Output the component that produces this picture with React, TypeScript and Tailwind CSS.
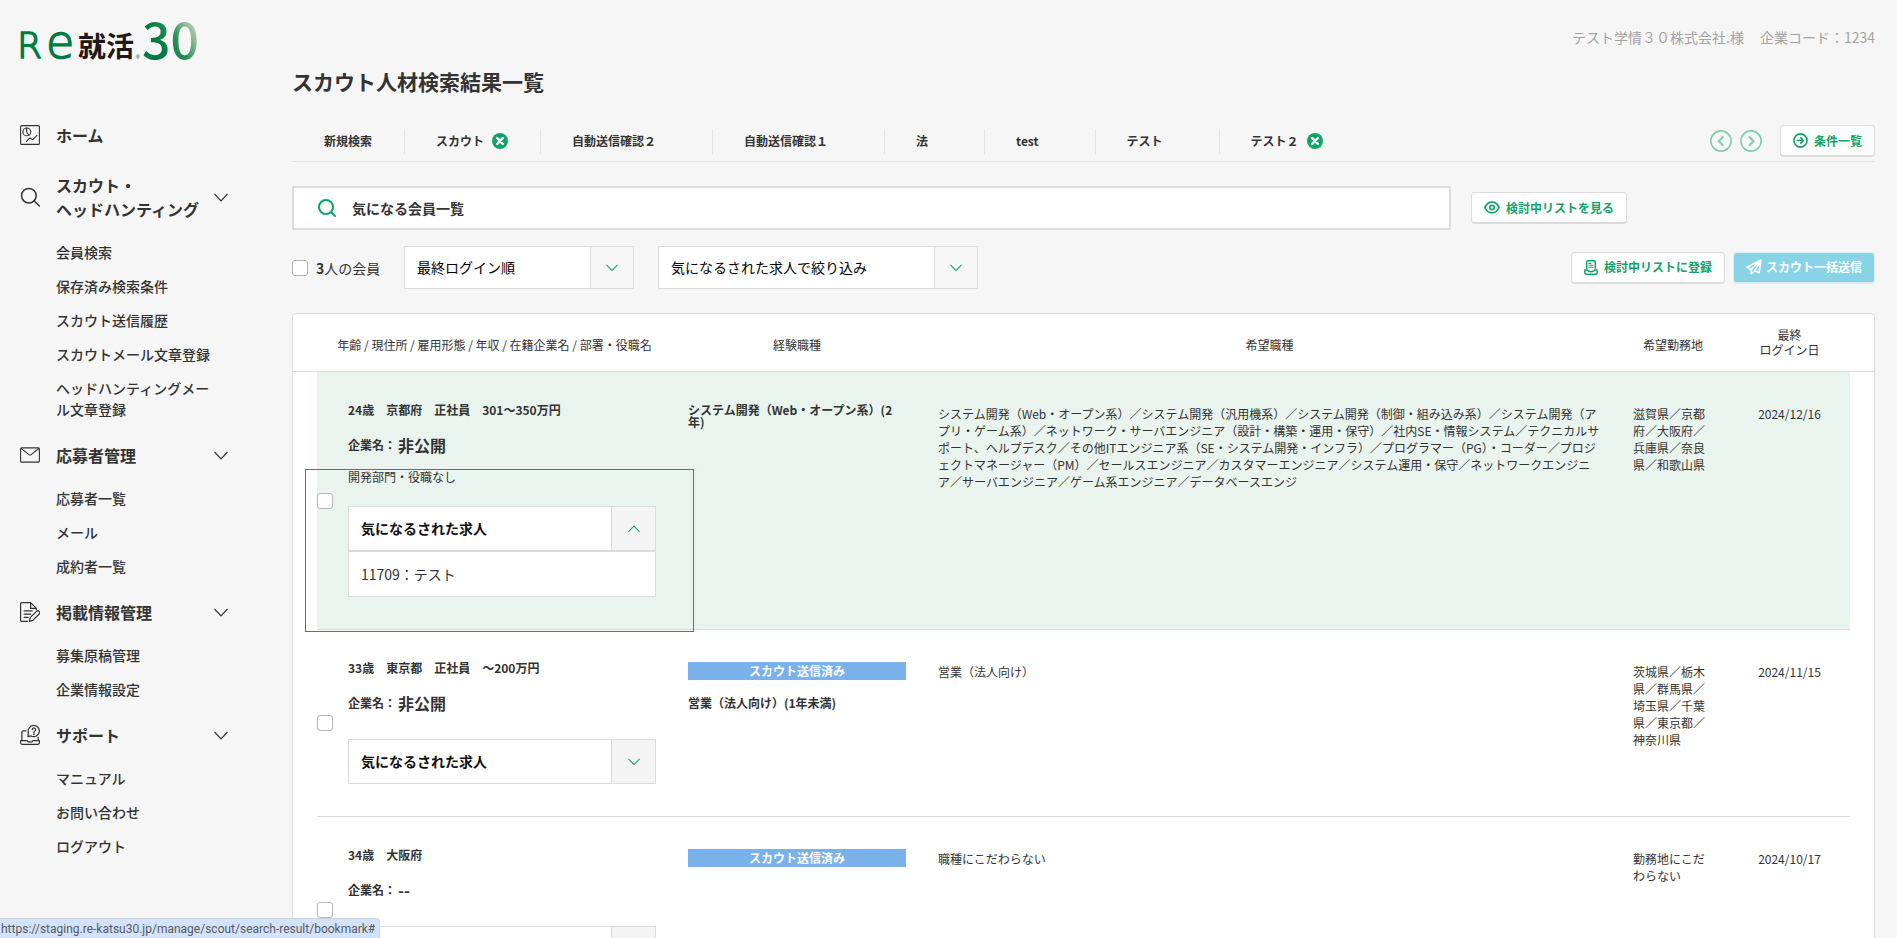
import { useState } from "react";
import type { ReactNode } from "react";

type MenuGroup = {
  label: ReactNode;
  icon: ReactNode;
  items: string[];
};

type Member = {
  id: number;
  profile: string;
  company: string;
  department?: string;
  scouted: boolean;
  experience?: string;
  wishedJobs: string;
  wishedArea: string;
  lastLogin: string;
  jobs: string[];
  selected?: boolean;
};

/* ---------- icons ---------- */

const HomeIcon = () => (
  <svg width="20" height="20" viewBox="0 0 20 20" fill="none" stroke="#333" strokeWidth="1.1" strokeLinecap="round" strokeLinejoin="round" className="shrink-0" aria-hidden="true">
    <rect x="0.6" y="0.6" width="18.8" height="18.8" rx="1" />
    <circle cx="6.8" cy="6.9" r="3.9" />
    <path d="M6.6 3v4l2.3 3.2" />
    <path d="M6.4 16.4l3.6-3.6 2.4 2 4.6-4.4M6.4 16.4l1.2-1" />
  </svg>
);

const SearchIcon = () => (
  <svg width="20" height="20" viewBox="0 0 20 20" fill="none" stroke="#333" strokeWidth="1.5" strokeLinecap="round" className="shrink-0" aria-hidden="true">
    <circle cx="8.9" cy="8.7" r="7.3" />
    <path d="M14.2 14l5.2 5" />
  </svg>
);

const MailIcon = () => (
  <svg width="20" height="16" viewBox="0 0 20 16" fill="none" stroke="#333" strokeWidth="1.1" strokeLinejoin="round" className="shrink-0" aria-hidden="true">
    <rect x="0.6" y="0.9" width="18.8" height="14.2" rx="1" />
    <path d="M0.9 1.3l8 6.3q1.1.8 2.2 0l8-6.3" />
  </svg>
);

const DocumentIcon = () => (
  <svg width="20" height="20" viewBox="0 0 20 20" fill="none" stroke="#333" strokeWidth="1.2" strokeLinecap="round" strokeLinejoin="round" className="shrink-0" aria-hidden="true">
    <path d="M7.6 19.4H1.8a1.2 1.2 0 0 1-1.2-1.2V1.8A1.2 1.2 0 0 1 1.8.6h8.8l5.6 5.6v1.4" />
    <path d="M10.6.8v5.6h5.4" />
    <path d="M4.2 8.9h8M4.2 12.2h6.6M4.2 15.4h4" />
    <path d="M9.4 19.3l.8-3.6 6.3-6.4a1.9 1.9 0 0 1 2.7 2.7l-6.4 6.4-3.4.9z" />
  </svg>
);

const SupportIcon = () => (
  <svg width="20" height="20" viewBox="0 0 20 20" fill="none" stroke="#333" strokeWidth="1.2" strokeLinecap="round" strokeLinejoin="round" className="shrink-0" aria-hidden="true">
    <path d="M6 5.8H3.2a1.3 1.3 0 0 0-1.3 1.3v8.4M18.2 12.2v3.3" />
    <path d="M.6 15.7h6.6l.9 1.2h3.8l.9-1.2h6.6v2a1.7 1.7 0 0 1-1.7 1.7H2.3a1.7 1.7 0 0 1-1.7-1.7z" />
    <path d="M8.3 7.3a5.6 5.6 0 1 1 2.7 3.6l-3.1.7z" />
    <path d="M12.2 4.7a1.7 1.7 0 1 1 2.6 1.4c-.7.4-.9.7-.9 1.3" />
    <circle cx="13.9" cy="9.2" r=".35" fill="#333" />
  </svg>
);

const Chevron = ({ up = false, className = "" }: { up?: boolean; className?: string }) => (
  <svg viewBox="0 0 14 9" fill="none" stroke="currentColor" strokeWidth="1.2" className={`shrink-0 ${className}`} aria-hidden="true">
    <path d={up ? "M.5 8L7 1.2 13.5 8" : "M.5 1L7 7.8 13.5 1"} />
  </svg>
);

const CloseIcon = () => (
  <svg width="16" height="16" viewBox="0 0 16 16" aria-hidden="true">
    <circle cx="8" cy="8" r="8" fill="#10a566" />
    <path d="M5.2 5.2l5.6 5.6M10.8 5.2l-5.6 5.6" stroke="#fff" strokeWidth="2.4" strokeLinecap="round" />
  </svg>
);

const CircleArrow = ({ direction }: { direction: "left" | "right" }) => (
  <svg width="22" height="22" viewBox="0 0 22 22" fill="none" stroke="#80cdab" strokeWidth="1.6" strokeLinecap="round" aria-hidden="true">
    <circle cx="11" cy="11" r="10.1" />
    <path strokeWidth="2" d={direction === "left" ? "M12.8 7l-4 4.2 4 4.2" : "M9.4 7l4 4.2-4 4.2"} />
  </svg>
);

const ListIcon = () => (
  <svg width="15" height="15" viewBox="0 0 15 15" fill="none" stroke="currentColor" strokeWidth="1.6" strokeLinecap="round" strokeLinejoin="round" aria-hidden="true">
    <circle cx="7.5" cy="7.5" r="6.6" />
    <path d="M4.5 7.5h5.8M7.8 4.9l2.6 2.6-2.6 2.6" />
  </svg>
);

const EyeIcon = () => (
  <svg width="16" height="13" viewBox="0 0 16 13" fill="none" stroke="currentColor" strokeWidth="1.7" strokeLinejoin="round" aria-hidden="true">
    <path d="M.9 6.5C2.4 3 5 1.2 8 1.2s5.6 1.8 7.1 5.3C13.6 10 11 11.8 8 11.8S2.4 10 .9 6.5z" />
    <circle cx="8" cy="6.5" r="2.2" />
  </svg>
);

const TrayIcon = () => (
  <svg width="14" height="15" viewBox="0 0 14 15" fill="none" stroke="currentColor" strokeWidth="1.5" strokeLinecap="round" strokeLinejoin="round" aria-hidden="true">
    <path d="M2.7 8.6V2A1.2 1.2 0 0 1 3.9.8h6.2A1.2 1.2 0 0 1 11.3 2v6.6" />
    <path d="M5 3.4h1.8M5 5.3h4M5 7.2h4" strokeWidth="1.1" />
    <path d="M.8 9.9h2.6c.6 1.3 1.9 1.9 3.6 1.9s3-.6 3.6-1.9h2.6v2.9a1.4 1.4 0 0 1-1.4 1.4H2.2a1.4 1.4 0 0 1-1.4-1.4z" />
  </svg>
);

const PlaneIcon = () => (
  <svg width="16" height="16" viewBox="0 0 16 16" fill="none" stroke="currentColor" strokeWidth="1.6" strokeLinecap="round" strokeLinejoin="round" aria-hidden="true">
    <path d="M15 1L.9 8.3l4.2 2.2L15 1l-1.9 12.8-4.3-2L15 1M5.1 10.5v4.3l3.7-3" />
  </svg>
);

const Logo = () => (
  <svg width="210" height="76" viewBox="0 0 210 76" role="img" aria-label="Re就活30">
    <defs>
      <linearGradient id="logo-green" gradientUnits="userSpaceOnUse" x1="160" y1="46" x2="194" y2="26">
        <stop offset="0" stopColor="#007c42" />
        <stop offset="0.45" stopColor="#2f8f5c" />
        <stop offset="1" stopColor="#b9cfae" />
      </linearGradient>
    </defs>
    <g fontFamily="DejaVu Sans" fontWeight="200" fill="#007c42" stroke="#007c42" strokeWidth="1.6">
      <text x="17" y="58" fontSize="36">R</text>
      <text x="46" y="58" fontSize="46">e</text>
    </g>
    <text x="78" y="57" fontFamily="Noto Sans CJK JP" fontWeight="700" fontSize="28" fill="#231815">就活</text>
    <text x="136" y="59" fontFamily="Liberation Sans" fontSize="5" fill="#231815">®</text>
    <text x="142" y="59" fontFamily="Noto Sans CJK JP" fontWeight="500" fontSize="50" fill="url(#logo-green)">30</text>
  </svg>
);

/* ---------- data ---------- */

const menu: MenuGroup[] = [
  {
    label: (
      <>
        スカウト・
        <br />
        ヘッドハンティング
      </>
    ),
    icon: <SearchIcon />,
    items: ["会員検索", "保存済み検索条件", "スカウト送信履歴", "スカウトメール文章登録", "ヘッドハンティングメール文章登録"],
  },
  { label: "応募者管理", icon: <MailIcon />, items: ["応募者一覧", "メール", "成約者一覧"] },
  { label: "掲載情報管理", icon: <DocumentIcon />, items: ["募集原稿管理", "企業情報設定"] },
  { label: "サポート", icon: <SupportIcon />, items: ["マニュアル", "お問い合わせ", "ログアウト"] },
];

const tabs = [
  { label: "スカウト", closable: true },
  { label: "自動送信確認２", closable: false },
  { label: "自動送信確認１", closable: false },
  { label: "法", closable: false },
  { label: "test", closable: false },
  { label: "テスト", closable: false },
  { label: "テスト２", closable: true },
];

const members: Member[] = [
  {
    id: 1,
    profile: "24歳　京都府　正社員　301～350万円",
    company: "非公開",
    department: "開発部門・役職なし",
    scouted: false,
    experience: "システム開発（Web・オープン系）(2年)",
    wishedJobs:
      "システム開発（Web・オープン系）／システム開発（汎用機系）／システム開発（制御・組み込み系）／システム開発（アプリ・ゲーム系）／ネットワーク・サーバエンジニア（設計・構築・運用・保守）／社内SE・情報システム／テクニカルサポート、ヘルプデスク／その他ITエンジニア系（SE・システム開発・インフラ）／プログラマー（PG）・コーダー／プロジェクトマネージャー（PM）／セールスエンジニア／カスタマーエンジニア／システム運用・保守／ネットワークエンジニア／サーバエンジニア／ゲーム系エンジニア／データベースエンジ",
    wishedArea: "滋賀県／京都府／大阪府／兵庫県／奈良県／和歌山県",
    lastLogin: "2024/12/16",
    jobs: ["11709：テスト"],
    selected: true,
  },
  {
    id: 2,
    profile: "33歳　東京都　正社員　～200万円",
    company: "非公開",
    scouted: true,
    experience: "営業（法人向け）(1年未満)",
    wishedJobs: "営業（法人向け）",
    wishedArea: "茨城県／栃木県／群馬県／埼玉県／千葉県／東京都／神奈川県",
    lastLogin: "2024/11/15",
    jobs: ["11709：テスト"],
  },
  {
    id: 3,
    profile: "34歳　大阪府",
    company: "--",
    scouted: true,
    wishedJobs: "職種にこだわらない",
    wishedArea: "勤務地にこだわらない",
    lastLogin: "2024/10/17",
    jobs: ["11709：テスト"],
  },
];

/* ---------- parts ---------- */

const whiteButton =
  "flex h-8 shrink-0 items-center gap-1.5 rounded border border-b-2 border-[#dcdcdc] bg-white px-3 text-xs font-bold text-[#10a566]";

const checkboxClass =
  "block h-4 w-4 shrink-0 appearance-none rounded-[3px] border border-[#b5b5b5] bg-white checked:bg-[#10a566]";

function Sidebar() {
  return (
    <aside className="w-[292px] shrink-0">
      <a href="#" className="block">
        <Logo />
      </a>
      <nav className="mt-[43px] ml-5 flex w-52 flex-col gap-[23px]">
        <a href="#" className="flex h-[31px] items-center gap-4 font-bold">
          <HomeIcon />
          ホーム
        </a>
        {menu.map((group) => (
          <section key={group.items[0]}>
            <button type="button" className="flex w-full items-center text-left text-base leading-6 font-bold">
              {group.icon}
              <span className="flex-1 pl-4 whitespace-nowrap">{group.label}</span>
              <Chevron className="w-3.5" />
            </button>
            <ul className="mt-[21px] flex flex-col gap-[13px] pr-3 pl-9 text-sm leading-[21px] font-medium">
              {group.items.map((item) => (
                <li key={item}>
                  <a href="#">{item}</a>
                </li>
              ))}
            </ul>
          </section>
        ))}
      </nav>
    </aside>
  );
}

function Tabs() {
  return (
    <div className="mt-[29px] flex items-center border-b border-[#e5e5e5] pb-1">
      <ul className="flex flex-1 items-center text-xs font-bold">
        <li className="flex h-[25px] items-center border-r border-[#e5e5e5] px-8">
          <a href="#">新規検索</a>
        </li>
        {tabs.map((tab) => (
          <li
            key={tab.label}
            className="flex h-[25px] items-center gap-2 border-r border-[#e5e5e5] pr-8 pl-[31px] last:border-r-0"
          >
            <a href="#">{tab.label}</a>
            {tab.closable ? (
              <button type="button" aria-label={`${tab.label}を閉じる`}>
                <CloseIcon />
              </button>
            ) : (
              <span className="w-4" />
            )}
          </li>
        ))}
      </ul>
      <div className="flex items-center gap-2">
        <button type="button" aria-label="前へ">
          <CircleArrow direction="left" />
        </button>
        <button type="button" aria-label="次へ">
          <CircleArrow direction="right" />
        </button>
        <button type="button" className={`${whiteButton} ml-2.5`}>
          <ListIcon />
          条件一覧
        </button>
      </div>
    </div>
  );
}

function SortSelect({ label, option, className }: { label: string; option: string; className: string }) {
  return (
    <div className={`relative h-[43px] ${className}`}>
      <select
        aria-label={label}
        className="h-full w-full appearance-none border border-[#dcdcdc] bg-white pb-0.5 pl-3 text-sm text-black"
      >
        <option>{option}</option>
      </select>
      <span className="pointer-events-none absolute inset-y-0 right-0 flex w-11 items-center justify-center border border-[#dcdcdc] bg-[#f6f6f6] text-[#10a566]">
        <Chevron className="w-3" />
      </span>
    </div>
  );
}

function JobDropdown({ jobs, defaultOpen }: { jobs: string[]; defaultOpen: boolean }) {
  const [open, setOpen] = useState(defaultOpen);

  return (
    <div className="mt-[17px]">
      <button
        type="button"
        aria-expanded={open}
        onClick={() => setOpen(!open)}
        className="flex h-[45px] w-full items-center border border-[#dcdcdc] bg-white text-left text-sm font-bold text-[#111]"
      >
        <span className="flex-1 pb-0.5 pl-3">気になるされた求人</span>
        <span className="flex h-full w-11 items-center justify-center border-l border-[#dcdcdc] bg-[#f4f4f4] text-[#10a566]">
          <Chevron up={open} className="w-3" />
        </span>
      </button>
      {open && (
        <ul className="border border-[#dcdcdc] bg-white text-sm">
          {jobs.map((job) => (
            <li key={job} className="flex h-11 items-center px-3">
              <a href="#">{job}</a>
            </li>
          ))}
        </ul>
      )}
    </div>
  );
}

function MemberRow({ member }: { member: Member }) {
  const cell = member.selected ? "border-b border-[#dcdcdc] bg-[#e9f4ee]" : "border-b border-[#dcdcdc]";

  return (
    <tr className="text-xs">
      <td />
      <td className={`relative pr-4 ${cell}`}>
        <div className="flex items-center gap-[15px]">
          <input type="checkbox" aria-label={member.profile} className={checkboxClass} />
          <div className="flex min-w-0 flex-1 flex-col py-8">
            <p className="leading-3 font-bold">{member.profile}</p>
            <p className="mt-[19px] mb-[9px] flex h-5 items-center gap-0.5 font-bold">
              企業名：<span className="text-base leading-5">{member.company}</span>
            </p>
            {member.department && <p className="leading-[25px]">{member.department}</p>}
            <JobDropdown jobs={member.jobs} defaultOpen={!!member.selected} />
          </div>
        </div>
        {/* red marker around the opened job list */}
        {member.selected && (
          <div className="pointer-events-none absolute top-[97px] -right-[22px] -bottom-[3px] -left-3 z-10 border border-[#e03a3a]" />
        )}
      </td>
      <td className={`px-4 py-8 align-top leading-3 font-bold ${cell}`}>
        {member.scouted && (
          <p className="mb-[17px] bg-[#7ab1ea] text-center leading-[18px] text-white">スカウト送信済み</p>
        )}
        {member.experience}
      </td>
      <td className={`px-4 py-[33px] align-top leading-[17px] ${cell}`}>{member.wishedJobs}</td>
      <td className={`px-4 py-[33px] align-top leading-[17px] ${cell}`}>{member.wishedArea}</td>
      <td className={`py-[33px] text-center align-top leading-[17px] ${cell}`}>{member.lastLogin}</td>
      <td />
    </tr>
  );
}

function MemberTable() {
  return (
    <div className="mt-6 rounded-t border border-[#dcdcdc] bg-white">
      <table className="w-full table-fixed border-separate border-spacing-0">
        <colgroup>
          <col className="w-6" />
          <col className="w-[355px]" />
          <col className="w-[250px]" />
          <col />
          <col className="w-28" />
          <col className="w-[121px]" />
          <col className="w-6" />
        </colgroup>
        <thead>
          <tr className="h-[58px] text-xs leading-[15px] [&>th]:border-b [&>th]:border-[#dcdcdc] [&>th]:font-normal">
            <th />
            <th className="pt-1">年齢 / 現住所 / 雇用形態 / 年収 / 在籍企業名 / 部署・役職名</th>
            <th className="pt-1">経験職種</th>
            <th className="pt-1">希望職種</th>
            <th className="pt-1">希望勤務地</th>
            <th className="pb-0.5">
              最終
              <br />
              ログイン日
            </th>
            <th />
          </tr>
        </thead>
        <tbody>
          {members.map((member) => (
            <MemberRow key={member.id} member={member} />
          ))}
        </tbody>
      </table>
    </div>
  );
}

export default function App() {
  return (
    <div className="flex h-screen overflow-hidden bg-[#f6f6f6] font-['Noto_Sans_CJK_JP',sans-serif] text-[#333]">
      <Sidebar />

      <main className="min-w-0 flex-1 pt-[27px] pr-[22px]">
        <div className="flex justify-end gap-4 text-sm leading-[21px] text-[#a3a3a3]">
          <span>テスト学情３０株式会社.様</span>
          <span>企業コード：1234</span>
        </div>
        <h1 className="mt-[18px] text-[21px] leading-[30px] font-bold">スカウト人材検索結果一覧</h1>

        <Tabs />

        <div className="mt-6 flex items-center gap-5 pr-[248px]">
          <label className="flex h-11 flex-1 items-center gap-4 border-2 border-[#dcdcdc] bg-white pl-6 text-[#10a566]">
            <svg width="18" height="18" viewBox="0 0 18 18" fill="none" stroke="currentColor" strokeWidth="2" strokeLinecap="round" aria-hidden="true">
              <circle cx="8" cy="8" r="7" />
              <path d="M13 13l4 4" />
            </svg>
            <input
              aria-label="検索条件"
              defaultValue="気になる会員一覧"
              className="min-w-0 flex-1 bg-transparent text-sm font-bold text-[#333] outline-none"
            />
          </label>
          <button type="button" className={whiteButton}>
            <EyeIcon />
            検討中リストを見る
          </button>
        </div>

        <div className="mt-4 flex items-center">
          <label className="flex w-28 items-center gap-2 text-sm">
            <input type="checkbox" className={checkboxClass} />
            <span>
              <b className="font-bold">3</b>人の会員
            </span>
          </label>
          <SortSelect label="並び順" option="最終ログイン順" className="w-[230px]" />
          <SortSelect label="求人で絞り込み" option="気になるされた求人で絞り込み" className="ml-6 w-80" />
          <div className="ml-auto flex gap-2">
            <button type="button" className={whiteButton}>
              <TrayIcon />
              検討中リストに登録
            </button>
            <button
              type="button"
              className="flex h-8 items-center gap-1 rounded border border-b-2 border-[#e3e9ec] bg-[#88d4e6] px-3 text-xs font-bold text-white"
            >
              <PlaneIcon />
              スカウト一括送信
            </button>
          </div>
        </div>

        <MemberTable />
      </main>

      {/* link target shown at the window's lower edge */}
      <div className="fixed bottom-0 left-0 z-20 h-5 rounded-tr border-t border-r border-[#cfd3da] bg-[#d3e3fd] pr-1 pl-px font-['Roboto',sans-serif] text-xs leading-5 text-[#5a5a5a]">
        https://staging.re-katsu30.jp/manage/scout/search-result/bookmark#
      </div>
    </div>
  );
}
